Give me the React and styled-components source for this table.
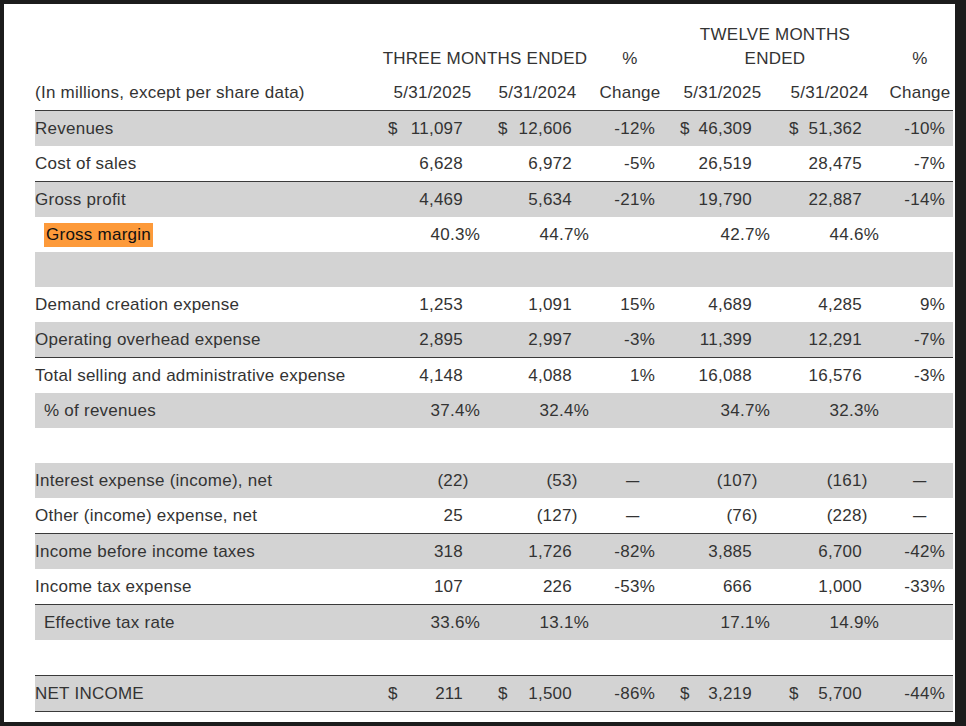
import React from 'react';
import styled, { createGlobalStyle } from 'styled-components';

const GlobalStyle = createGlobalStyle`
    html, body {
        margin: 0;
        padding: 0;
        background: #1c1c1c;
    }
    body {
        font-family: "Liberation Sans", Arial, Helvetica, sans-serif;
    }
`;

// left / right paddings per value column, tuned to where the figures sit
const columns = [
    { padL: 8, padR: 22, pctR: 5 },
    { padL: 13, padR: 18, pctR: 1 },
    { change: true, padR: 15 },
    { padL: 10, padR: 23, pctR: 5 },
    { padL: 14, padR: 18, pctR: 1 },
    { change: true, padR: 8 },
];

const rows = [
    { label: 'Revenues', shade: true, rule: true, values: ['$11,097', '$12,606', '-12%', '$46,309', '$51,362', '-10%'] },
    { label: 'Cost of sales', values: ['6,628', '6,972', '-5%', '26,519', '28,475', '-7%'] },
    { label: 'Gross profit', shade: true, rule: true, values: ['4,469', '5,634', '-21%', '19,790', '22,887', '-14%'] },
    { label: 'Gross margin', pct: true, marked: true, values: ['40.3%', '44.7%', '', '42.7%', '44.6%', ''] },
    { blank: true, shade: true },
    { label: 'Demand creation expense', values: ['1,253', '1,091', '15%', '4,689', '4,285', '9%'] },
    { label: 'Operating overhead expense', shade: true, values: ['2,895', '2,997', '-3%', '11,399', '12,291', '-7%'] },
    { label: 'Total selling and administrative expense', rule: true, values: ['4,148', '4,088', '1%', '16,088', '16,576', '-3%'] },
    { label: '% of revenues', shade: true, pct: true, values: ['37.4%', '32.4%', '', '34.7%', '32.3%', ''] },
    { blank: true },
    { label: 'Interest expense (income), net', shade: true, values: ['(22)', '(53)', '—', '(107)', '(161)', '—'] },
    { label: 'Other (income) expense, net', values: ['25', '(127)', '—', '(76)', '(228)', '—'] },
    { label: 'Income before income taxes', shade: true, rule: true, values: ['318', '1,726', '-82%', '3,885', '6,700', '-42%'] },
    { label: 'Income tax expense', values: ['107', '226', '-53%', '666', '1,000', '-33%'] },
    { label: 'Effective tax rate', shade: true, rule: true, pct: true, values: ['33.6%', '13.1%', '', '17.1%', '14.9%', ''] },
    { blank: true },
    { label: 'NET INCOME', shade: true, rule: true, closing: true, values: ['$211', '$1,500', '-86%', '$3,219', '$5,700', '-44%'] },
];

const Frame = styled.div`
    padding: 4px 11px 4px 4px;
`;

const Sheet = styled.div`
    background: #fff;
    height: 718px;
    box-sizing: border-box;
    padding: 19px 0 0 31px;
    color: #333;
    font-size: 17px;
    letter-spacing: 0.25px;
`;

const Table = styled.div`
    width: 918px;
`;

const Row = styled.div`
    display: grid;
    grid-template-columns: 345px 105px 105px 80px 105px 105px 73px;
    height: 35px;
    align-items: center;
    line-height: 1;
    background: ${p => (p.$shade ? '#d3d3d3' : 'transparent')};
    border-top: ${p => (p.$rule ? '1px solid #3a3a3a' : 'none')};
    border-bottom: ${p => (p.$closing ? '1px solid #3a3a3a' : 'none')};
`;

const GroupRow = styled(Row)`
    height: 52px;
    align-items: start;
    line-height: 24px;
`;

const GroupHead = styled.div`
    grid-column: ${p => p.$span};
    text-align: center;
    padding-top: ${p => (p.$low ? '24px' : '0')};
    padding-left: ${p => p.$shift || 0}px;
`;

const ColHead = styled.div`
    text-align: center;
    white-space: nowrap;
    padding-left: ${p => p.$shift || 0}px;
`;

const Label = styled.div`
    padding-left: ${p => (p.$indent ? '9px' : '0')};
    white-space: nowrap;
`;

const Marked = styled.span`
    background: #fd9a3a;
    color: #111;
    padding: 2px 2px 3px;
`;

const Cell = styled.div`
    display: flex;
    justify-content: ${p => (p.$center ? 'center' : p.$dollar ? 'space-between' : 'flex-end')};
    padding-left: ${p => (p.$center ? 6 : p.$padL || 0)}px;
    padding-right: ${p => (p.$center ? 0 : p.$padR || 0)}px;
    white-space: nowrap;
`;

const Hang = styled.span`
    margin-right: -0.333em;
`;

const Dash = styled.span`
    display: inline-block;
    transform: scaleX(0.78);
`;

const Figure = ({ text }) => {
    if (text.startsWith('(')) {
        return <span>{text.slice(0, -1)}<Hang>)</Hang></span>;
    }
    return <span>{text}</span>;
};

const ValueCell = ({ col, text, pct }) => {
    if (!text) return <div />;
    if (text === '—') {
        return <Cell $center><Dash>—</Dash></Cell>;
    }
    if (col.change) {
        return <Cell $padR={col.padR}>{text}</Cell>;
    }
    if (pct) {
        return <Cell $padR={col.pctR}>{text}</Cell>;
    }
    const dollar = text.startsWith('$');
    return (
        <Cell $dollar={dollar} $padL={col.padL} $padR={col.padR}>
            {dollar && <span>$</span>}
            <Figure text={dollar ? text.slice(1) : text} />
        </Cell>
    );
};

export default function App() {
    return (
        <>
            <GlobalStyle />
            <Frame>
                <Sheet>
                    <Table>
                        <GroupRow>
                            <GroupHead $span="2 / 4" $low>THREE MONTHS ENDED</GroupHead>
                            <GroupHead $span="4 / 5" $low>%</GroupHead>
                            <GroupHead $span="5 / 7">TWELVE MONTHS<br />ENDED</GroupHead>
                            <GroupHead $span="7 / 8" $low $shift={7}>%</GroupHead>
                        </GroupRow>
                        <Row>
                            <Label>(In millions, except per share data)</Label>
                            <ColHead>5/31/2025</ColHead>
                            <ColHead>5/31/2024</ColHead>
                            <ColHead>Change</ColHead>
                            <ColHead>5/31/2025</ColHead>
                            <ColHead $shift={4}>5/31/2024</ColHead>
                            <ColHead $shift={7}>Change</ColHead>
                        </Row>
                        {rows.map((row, index) => (
                            <Row key={index} $shade={row.shade} $rule={row.rule} $closing={row.closing}>
                                {row.blank ? null : (
                                    <>
                                        <Label $indent={row.pct}>
                                            {row.marked ? <Marked>{row.label}</Marked> : row.label}
                                        </Label>
                                        {row.values.map((value, i) => (
                                            <ValueCell key={i} col={columns[i]} text={value} pct={row.pct} />
                                        ))}
                                    </>
                                )}
                            </Row>
                        ))}
                    </Table>
                </Sheet>
            </Frame>
        </>
    );
}
